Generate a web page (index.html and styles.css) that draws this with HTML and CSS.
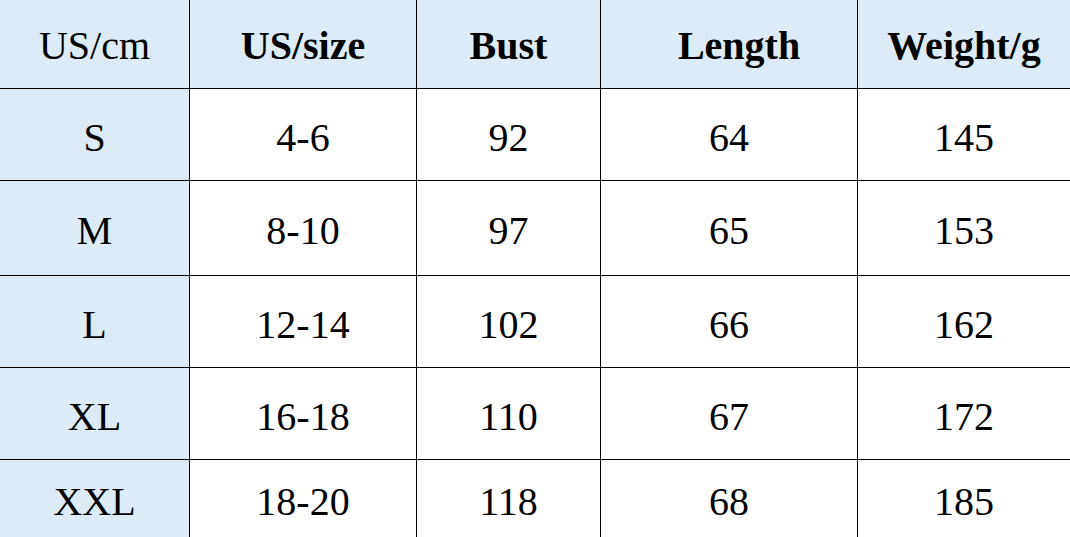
FILE: index.html
```html
<!DOCTYPE html>
<html lang="en">
<head>
<meta charset="utf-8">
<title>Size chart</title>
<link rel="stylesheet" href="styles.css">
</head>
<body>
<div class="chart">
  <div class="cell shade">US/cm</div>
  <div class="cell shade bold">US/size</div>
  <div class="cell shade bold">Bust</div>
  <div class="cell shade bold shift">Length</div>
  <div class="cell shade bold last">Weight/g</div>

  <div class="cell shade body">S</div>
  <div class="cell body">4-6</div>
  <div class="cell body">92</div>
  <div class="cell body">64</div>
  <div class="cell body last">145</div>

  <div class="cell shade body">M</div>
  <div class="cell body">8-10</div>
  <div class="cell body">97</div>
  <div class="cell body">65</div>
  <div class="cell body last">153</div>

  <div class="cell shade body">L</div>
  <div class="cell body">12-14</div>
  <div class="cell body">102</div>
  <div class="cell body">66</div>
  <div class="cell body last">162</div>

  <div class="cell shade body">XL</div>
  <div class="cell body">16-18</div>
  <div class="cell body">110</div>
  <div class="cell body">67</div>
  <div class="cell body last">172</div>

  <div class="cell shade body bottom">XXL</div>
  <div class="cell body bottom">18-20</div>
  <div class="cell body bottom">118</div>
  <div class="cell body bottom">68</div>
  <div class="cell body bottom last">185</div>
</div>
</body>
</html>
```

FILE: styles.css
```css
html, body {
  margin: 0;
  padding: 0;
  background: #ffffff;
  overflow: hidden;
}

.chart {
  display: grid;
  grid-template-columns: 190px 227px 184px 257px 212px;
  grid-template-rows: 89px 92px 95px 92px 92px 77px;
  width: 1070px;
  font-family: "Liberation Serif", "Times New Roman", serif;
  font-size: 40px;
  color: #000000;
}

.cell {
  box-sizing: border-box;
  border-right: 1px solid #000000;
  border-bottom: 1px solid #000000;
  display: flex;
  align-items: center;
  justify-content: center;
  padding-top: 2px;
  white-space: nowrap;
}

.shade {
  background: #ddebf7;
}

.bold {
  font-weight: bold;
}

.shift {
  padding-left: 20px;
}

.body {
  padding-top: 5px;
}

.bottom {
  border-bottom: none;
}

.last {
  border-right: none;
}
```
